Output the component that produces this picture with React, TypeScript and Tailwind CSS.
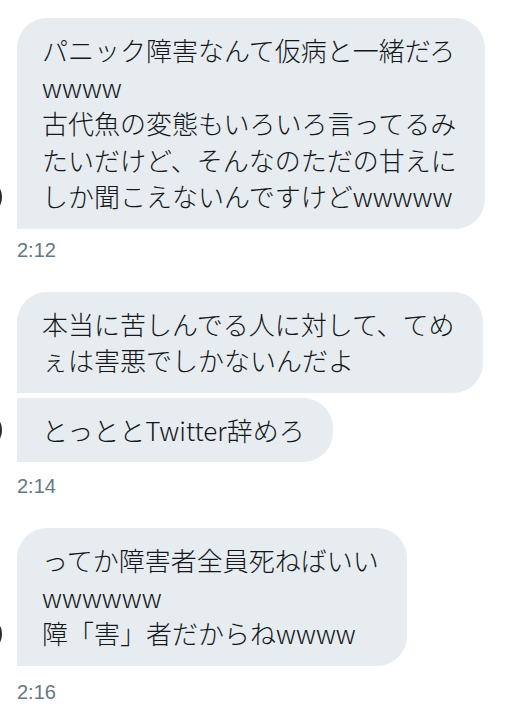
const font = { fontFamily: '"Noto Sans CJK JP", "Noto Sans", sans-serif' };

type Bubble = { lines: string[]; shape: string };

function Avatar() {
  return (
    <div className="flex w-[17px] shrink-0 items-end overflow-hidden">
      <div className="mb-[14px] ml-[-34px] h-[36px] w-[36px] shrink-0 rounded-full bg-[#2a2a2a]" />
    </div>
  );
}

function Group({ bubbles, time, timeGap }: { bubbles: Bubble[]; time: string; timeGap: string }) {
  return (
    <div>
      <div className="flex">
        <Avatar />
        <div className="flex flex-col items-start gap-[5px]">
          {bubbles.map((b, i) => (
            <div
              key={i}
              className={`bg-[#e6ecf0] py-[14px] pl-[25px] pr-[28px] text-[26px] font-light leading-[36.5px] text-[#14171a] ${b.shape}`}
              style={font}
            >
              {b.lines.map((l, j) => (
                <div key={j} className="whitespace-nowrap">
                  {l}
                </div>
              ))}
            </div>
          ))}
        </div>
      </div>
      <div
        className={`pl-[17px] text-[20px] leading-[24px] text-[#657786] ${timeGap}`}
        style={{ fontFamily: '"Liberation Sans", Arial, sans-serif' }}
      >
        {time}
      </div>
    </div>
  );
}

export default function App() {
  return (
    <div className="flex h-[720px] w-[524px] flex-col gap-[30px] overflow-hidden bg-white pt-[18px]">
      <Group
        time="2:12"
        timeGap="mt-[9px]"
        bubbles={[
          {
            shape: "rounded-[30px] rounded-bl-none",
            lines: [
              "パニック障害なんて仮病と一緒だろ",
              "wwww",
              "古代魚の変態もいろいろ言ってるみ",
              "たいだけど、そんなのただの甘えに",
              "しか聞こえないんですけどwwwww",
            ],
          },
        ]}
      />
      <Group
        time="2:14"
        timeGap="mt-[12px]"
        bubbles={[
          {
            shape: "rounded-[30px] rounded-bl-none",
            lines: ["本当に苦しんでる人に対して、てめ", "ぇは害悪でしかないんだよ"],
          },
          {
            shape: "rounded-[30px] rounded-tl-none rounded-bl-none",
            lines: ["とっととTwitter辞めろ"],
          },
        ]}
      />
      <Group
        time="2:16"
        timeGap="mt-[14px]"
        bubbles={[
          {
            shape: "rounded-[30px] rounded-bl-none",
            lines: ["ってか障害者全員死ねばいい", "wwwwww", "障「害」者だからねwwww"],
          },
        ]}
      />
    </div>
  );
}
